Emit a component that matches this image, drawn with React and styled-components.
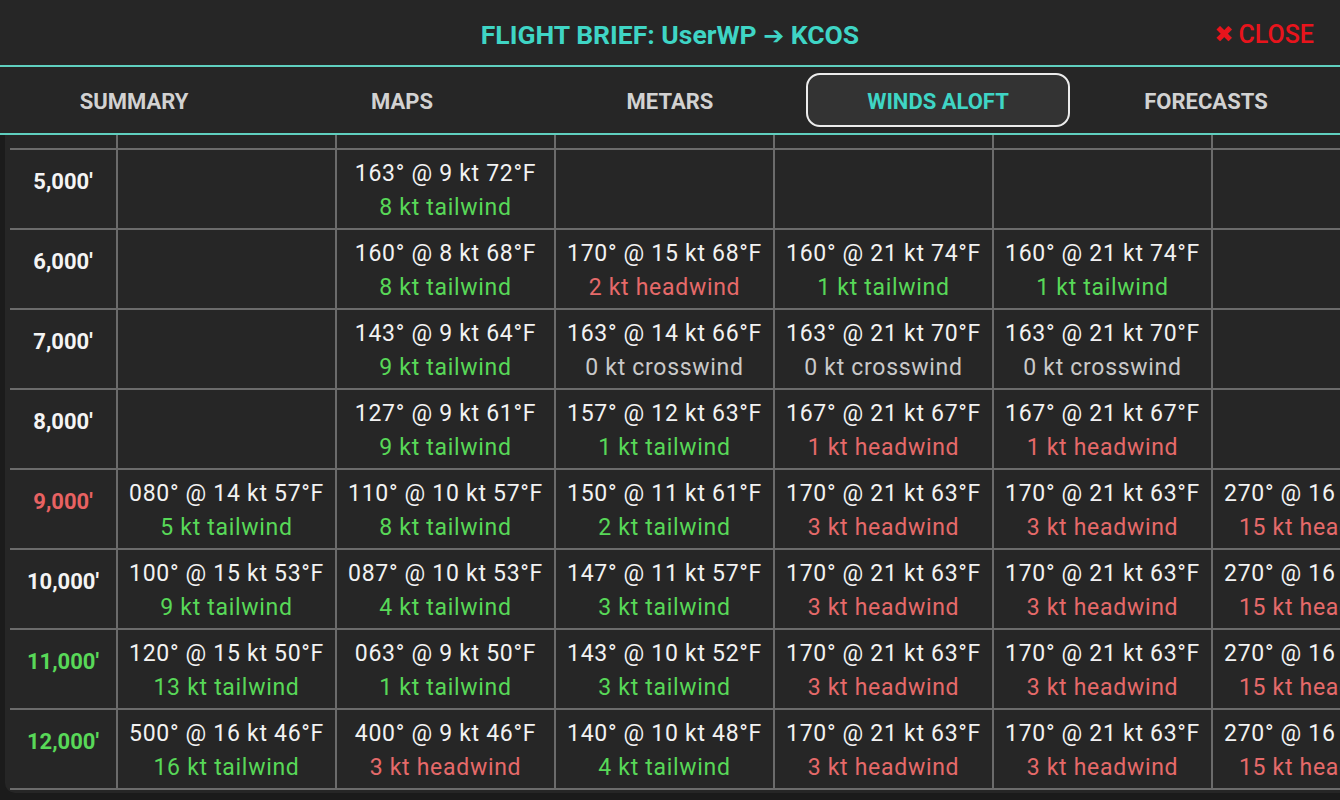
import { useLayoutEffect, useRef } from 'react';
import styled, { createGlobalStyle } from 'styled-components';

const TABS = ['SUMMARY', 'MAPS', 'METARS', 'WINDS ALOFT', 'FORECASTS'];

const G = 'tail';
const R = 'head';
const X = 'cross';

// one entry per altitude, one cell per leg; null = no data for that leg
const ROWS = [
  { alt: "3,000'", cells: [null, ['167° @ 8 kt 79°F', '7 kt tailwind', G], null, null, null, null] },
  { alt: "4,000'", cells: [null, ['165° @ 9 kt 75°F', '8 kt tailwind', G], null, null, null, null] },
  { alt: "5,000'", cells: [null, ['163° @ 9 kt 72°F', '8 kt tailwind', G], null, null, null, null] },
  {
    alt: "6,000'",
    cells: [
      null,
      ['160° @ 8 kt 68°F', '8 kt tailwind', G],
      ['170° @ 15 kt 68°F', '2 kt headwind', R],
      ['160° @ 21 kt 74°F', '1 kt tailwind', G],
      ['160° @ 21 kt 74°F', '1 kt tailwind', G],
      null,
    ],
  },
  {
    alt: "7,000'",
    cells: [
      null,
      ['143° @ 9 kt 64°F', '9 kt tailwind', G],
      ['163° @ 14 kt 66°F', '0 kt crosswind', X],
      ['163° @ 21 kt 70°F', '0 kt crosswind', X],
      ['163° @ 21 kt 70°F', '0 kt crosswind', X],
      null,
    ],
  },
  {
    alt: "8,000'",
    cells: [
      null,
      ['127° @ 9 kt 61°F', '9 kt tailwind', G],
      ['157° @ 12 kt 63°F', '1 kt tailwind', G],
      ['167° @ 21 kt 67°F', '1 kt headwind', R],
      ['167° @ 21 kt 67°F', '1 kt headwind', R],
      null,
    ],
  },
  {
    alt: "9,000'",
    tone: 'warn',
    cells: [
      ['080° @ 14 kt 57°F', '5 kt tailwind', G],
      ['110° @ 10 kt 57°F', '8 kt tailwind', G],
      ['150° @ 11 kt 61°F', '2 kt tailwind', G],
      ['170° @ 21 kt 63°F', '3 kt headwind', R],
      ['170° @ 21 kt 63°F', '3 kt headwind', R],
      ['270° @ 16 kt 63°F', '15 kt headwind', R],
    ],
  },
  {
    alt: "10,000'",
    cells: [
      ['100° @ 15 kt 53°F', '9 kt tailwind', G],
      ['087° @ 10 kt 53°F', '4 kt tailwind', G],
      ['147° @ 11 kt 57°F', '3 kt tailwind', G],
      ['170° @ 21 kt 63°F', '3 kt headwind', R],
      ['170° @ 21 kt 63°F', '3 kt headwind', R],
      ['270° @ 16 kt 63°F', '15 kt headwind', R],
    ],
  },
  {
    alt: "11,000'",
    tone: 'good',
    cells: [
      ['120° @ 15 kt 50°F', '13 kt tailwind', G],
      ['063° @ 9 kt 50°F', '1 kt tailwind', G],
      ['143° @ 10 kt 52°F', '3 kt tailwind', G],
      ['170° @ 21 kt 63°F', '3 kt headwind', R],
      ['170° @ 21 kt 63°F', '3 kt headwind', R],
      ['270° @ 16 kt 63°F', '15 kt headwind', R],
    ],
  },
  {
    alt: "12,000'",
    tone: 'good',
    cells: [
      ['500° @ 16 kt 46°F', '16 kt tailwind', G],
      ['400° @ 9 kt 46°F', '3 kt headwind', R],
      ['140° @ 10 kt 48°F', '4 kt tailwind', G],
      ['170° @ 21 kt 63°F', '3 kt headwind', R],
      ['170° @ 21 kt 63°F', '3 kt headwind', R],
      ['270° @ 16 kt 63°F', '15 kt headwind', R],
    ],
  },
];

const COMPONENT_COLORS = {
  tail: '#58d858',
  head: '#e56a6a',
  cross: '#c9c9c9',
};

const ALT_COLORS = {
  warn: '#e86262',
  good: '#58d858',
};

function App() {
  const panelRef = useRef(null);

  // the list opens scrolled to the highest altitudes
  useLayoutEffect(() => {
    const el = panelRef.current;
    if (el) el.scrollTop = el.scrollHeight;
  }, []);

  return (
    <>
      <GlobalStyle />
      <Page>
        <Header>
          <Title>
            FLIGHT BRIEF: UserWP <Arrow>➔</Arrow> KCOS
          </Title>
          <CloseButton type="button">
            <CloseIcon>✖</CloseIcon>
            CLOSE
          </CloseButton>
        </Header>

        <TabBar>
          {TABS.map((tab) => (
            <Tab key={tab} type="button" $active={tab === 'WINDS ALOFT'}>
              {tab}
            </Tab>
          ))}
        </TabBar>

        <Panel ref={panelRef}>
          <WindsGrid>
            {ROWS.map((row) => (
              <Row key={row.alt}>
                <AltCell $tone={row.tone}>{row.alt}</AltCell>
                {row.cells.map((cell, i) => (
                  <WindCell key={i}>
                    {cell && (
                      <>
                        <WindLine>{cell[0]}</WindLine>
                        <ComponentLine $kind={cell[2]}>{cell[1]}</ComponentLine>
                      </>
                    )}
                  </WindCell>
                ))}
              </Row>
            ))}
          </WindsGrid>
        </Panel>
      </Page>
    </>
  );
}

const GlobalStyle = createGlobalStyle`
  html, body {
    margin: 0;
    padding: 0;
    background: #1b1b1b;
    overflow: hidden;
  }

  body {
    font-family: Roboto, "Liberation Sans", sans-serif;
    color: #f2f2f2;
  }
`;

const Page = styled.div`
  display: flex;
  flex-direction: column;
  height: 100vh;
  background: #1b1b1b;
`;

const Header = styled.header`
  display: flex;
  align-items: center;
  justify-content: center;
  position: relative;
  height: 65px;
  background: #262626;
  border-bottom: 2px solid #5fcfbf;
`;

const Title = styled.h1`
  margin: 0;
  padding-top: 3px;
  font-size: 26.5px;
  font-weight: 700;
  color: #3fd5c5;
`;

const Arrow = styled.span`
  font-family: "DejaVu Sans", sans-serif;
  font-size: 25px;
`;

const CloseButton = styled.button`
  position: absolute;
  right: 26px;
  top: 50%;
  transform: translateY(-50%);
  display: flex;
  align-items: center;
  gap: 5px;
  padding: 3px 0 0;
  border: none;
  background: none;
  font-family: Roboto, sans-serif;
  font-size: 25px;
  font-weight: 500;
  color: #e8141c;
  cursor: pointer;
`;

const CloseIcon = styled.span`
  font-family: "DejaVu Sans", sans-serif;
  font-size: 23px;
`;

const TabBar = styled.nav`
  display: grid;
  grid-template-columns: repeat(5, 1fr);
  align-items: center;
  height: 66px;
  background: #262626;
  border-bottom: 2px solid #5fcfbf;
`;

const Tab = styled.button`
  height: 54px;
  margin: 0 2px;
  padding: 2px 0 0;
  border-radius: 14px;
  border: 2px solid ${(p) => (p.$active ? '#ececec' : 'transparent')};
  background: ${(p) => (p.$active ? '#333333' : 'transparent')};
  font-family: Roboto, sans-serif;
  font-size: 22px;
  font-weight: 700;
  color: ${(p) => (p.$active ? '#3fd5c5' : '#d2d2d2')};
  cursor: pointer;
`;

const Panel = styled.main`
  flex: 1;
  min-height: 0;
  margin: 0 0 7px 5px;
  padding: 0 0 3px 5px;
  background: #262626;
  border-radius: 0 0 0 10px;
  overflow: hidden;
`;

const WindsGrid = styled.div`
  display: grid;
  grid-template-columns: 108px repeat(6, 219px);
  width: max-content;
`;

const Row = styled.div`
  display: contents;
`;

const Cell = styled.div`
  box-sizing: border-box;
  height: 80px;
  border-right: 2px solid #6b6b6b;
  border-bottom: 2px solid #6b6b6b;
`;

const AltCell = styled(Cell)`
  display: flex;
  align-items: center;
  justify-content: center;
  padding-bottom: 16px;
  font-size: 22px;
  font-weight: 700;
  color: ${(p) => ALT_COLORS[p.$tone] || '#f4f4f4'};
`;

const WindCell = styled(Cell)`
  display: flex;
  flex-direction: column;
  align-items: center;
  justify-content: center;
  padding-top: 4px;
  font-size: 23px;
  letter-spacing: 0.7px;
  line-height: 34px;
  white-space: nowrap;
`;

const WindLine = styled.div`
  color: #f2f2f2;
`;

const ComponentLine = styled.div`
  color: ${(p) => COMPONENT_COLORS[p.$kind]};
`;

export default App;
